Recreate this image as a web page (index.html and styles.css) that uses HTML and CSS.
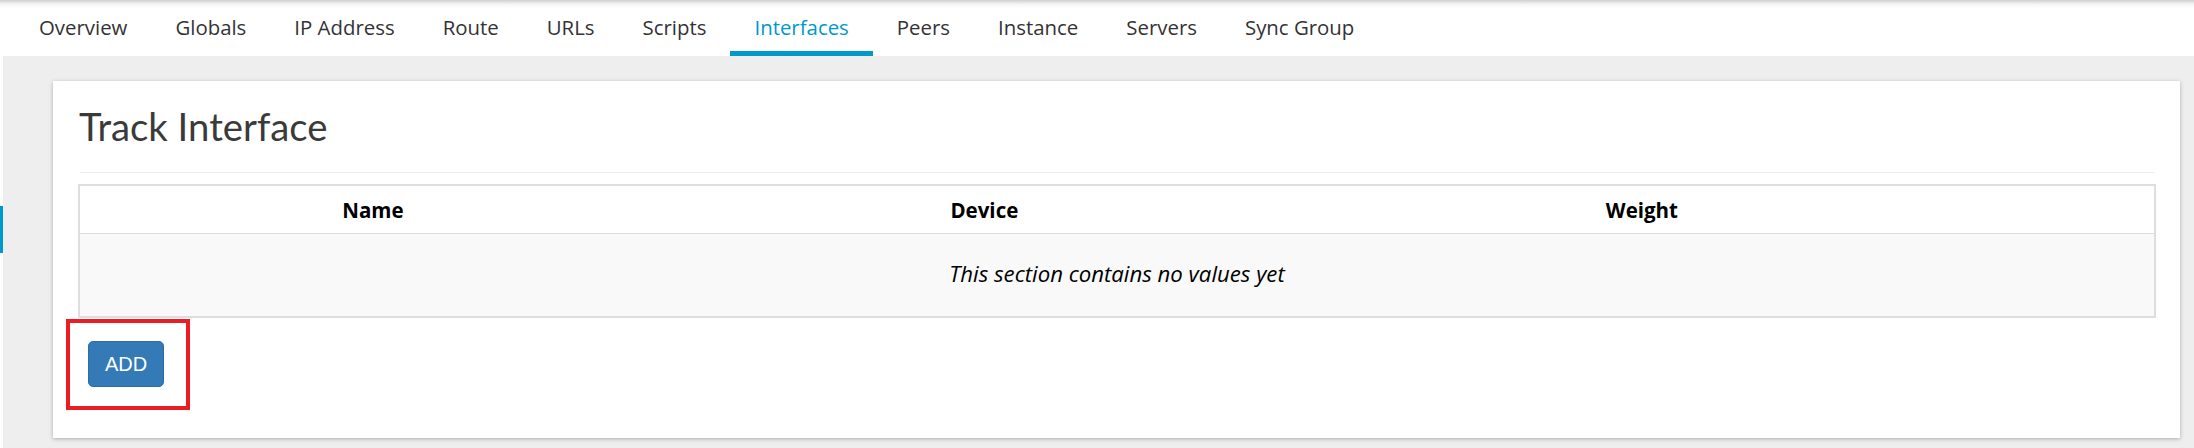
FILE: index.html
```html
<!DOCTYPE html>
<html lang="en">
<head>
<meta charset="utf-8">
<title>Track Interface</title>
<link rel="stylesheet" href="styles.css">
</head>
<body>
<nav class="tabs">
  <a class="tab">Overview</a>
  <a class="tab">Globals</a>
  <a class="tab">IP Address</a>
  <a class="tab">Route</a>
  <a class="tab">URLs</a>
  <a class="tab">Scripts</a>
  <a class="tab active">Interfaces</a>
  <a class="tab">Peers</a>
  <a class="tab">Instance</a>
  <a class="tab">Servers</a>
  <a class="tab">Sync Group</a>
</nav>
<div class="layout">
  <aside class="sidebar"><div class="marker"></div></aside>
  <main class="main">
    <section class="card">
      <h2 class="title">Track Interface</h2>
      <hr class="sep">
      <table class="grid">
        <colgroup>
          <col class="c-name"><col class="c-device"><col class="c-weight"><col class="c-actions">
        </colgroup>
        <thead>
          <tr><th>Name</th><th>Device</th><th>Weight</th><th></th></tr>
        </thead>
        <tbody>
          <tr><td class="empty" colspan="4">This section contains no values yet</td></tr>
        </tbody>
      </table>
      <div class="add-wrap">
        <button class="btn-add" type="button">ADD</button>
        <span class="highlight"></span>
      </div>
    </section>
  </main>
</div>
</body>
</html>
```
FILE: styles.css
```css
html, body {
  margin: 0;
  padding: 0;
}
body {
  width: 2194px;
  height: 448px;
  overflow: hidden;
  font-family: "Open Sans", "Noto Sans", sans-serif;
  color: #333;
  background: #fff;
}

/* top tab bar */
.tabs {
  display: flex;
  height: 56px;
  padding-left: 15px;
  background: linear-gradient(to bottom, #cfcfcf 0, #f4f4f4 4px, #fff 8px);
}
.tab {
  display: block;
  box-sizing: border-box;
  height: 56px;
  padding: 15px 24px 0;
  font-size: 20.4px;
  line-height: 24px;
  color: #333;
  border-bottom: 5px solid transparent;
  white-space: nowrap;
}
.tab.active {
  color: #0099cc;
  border-bottom-color: #0099cc;
}

/* page body */
.layout {
  display: flex;
  height: 392px;
}
.sidebar {
  width: 3px;
  padding-top: 150px;
  background: #fff;
}
.marker {
  width: 3px;
  height: 47px;
  background: #0099cc;
}
.main {
  flex: 1;
  background: #eee;
  padding: 25px 14px 10px 50px;
}
.card {
  background: #fff;
  box-shadow: 0 1px 4px rgba(0, 0, 0, 0.28);
  padding: 21px 24px 51px 25px;
}
.title {
  margin: 0 0 0 1px;
  font-family: Lato, "Open Sans", sans-serif;
  font-weight: 400;
  font-size: 38.3px;
  line-height: 48px;
  color: #3a3a3a;
}
.sep {
  margin: 22px 2px 11px;
  border: 0;
  border-top: 1px solid #ebebeb;
  height: 0;
}

/* table */
.grid {
  width: 100%;
  table-layout: fixed;
  border-collapse: separate;
  border-spacing: 0;
  border: 2px solid #dedede;
}
.c-name { width: 28.25%; }
.c-device { width: 30.71%; }
.c-weight { width: 32.70%; }
.c-actions { width: 8.34%; }
.grid th {
  padding: 12px 10px 11px;
  font-weight: 700;
  font-size: 20.5px;
  line-height: 24px;
  color: #000;
  text-align: center;
  border-bottom: 1px solid #dddddd;
}
.grid td.empty {
  padding: 27px 10px 29px;
  background: #f9f9f9;
  font-style: italic;
  font-size: 22.2px;
  line-height: 26px;
  color: #000;
  text-align: center;
}

/* add button */
.add-wrap {
  position: relative;
  display: inline-block;
  margin: 23px 0 0 10px;
  vertical-align: top;
}
.btn-add {
  display: block;
  box-sizing: border-box;
  width: 76px;
  height: 46px;
  padding: 0;
  font-family: "Liberation Sans", Arial, sans-serif;
  font-size: 20px;
  line-height: 44px;
  color: #fff;
  background: #337ab7;
  border: 1px solid #2e6da4;
  border-radius: 5px;
}
.highlight {
  position: absolute;
  top: -22px;
  left: -22px;
  right: -26px;
  bottom: -23px;
  border: 4px solid #ec1c24;
  pointer-events: none;
}
```
